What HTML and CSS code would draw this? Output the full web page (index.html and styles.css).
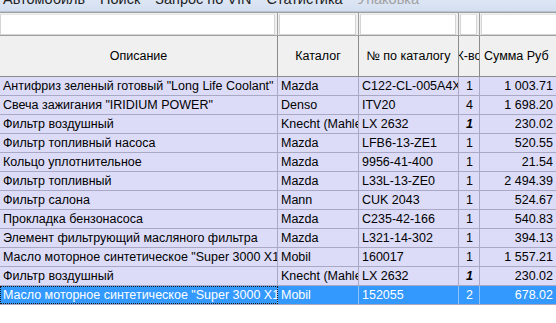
FILE: index.html
```html
<!DOCTYPE html>
<html>
<head>
<meta charset="utf-8">
<link rel="stylesheet" href="styles.css">
</head>
<body>
<div class="menu">
  <div class="menu-items">
    <span>Автомобиль</span>
    <span>Поиск</span>
    <span>Запрос по VIN</span>
    <span>Статистика</span>
    <span class="disabled">Упаковка</span>
  </div>
</div>
<div class="grid">
  <div class="row filter">
    <div class="fc"><div class="box"></div></div>
    <div class="fc"><div class="box"></div></div>
    <div class="fc"><div class="box"></div></div>
    <div class="fc"><div class="box"></div></div>
    <div class="fc"><div class="box"></div></div>
  </div>
  <div class="row head">
    <div class="hc">Описание</div>
    <div class="hc">Каталог</div>
    <div class="hc">№ по каталогу</div>
    <div class="hc clip">К-во</div>
    <div class="hc">Сумма Руб</div>
  </div>
  <div class="row data"><div class="c">Антифриз зеленый готовый "Long Life Coolant"</div><div class="c">Mazda</div><div class="c">C122-CL-005A4X</div><div class="c n">1</div><div class="c r">1 003.71</div></div>
  <div class="row data"><div class="c">Свеча зажигания "IRIDIUM POWER"</div><div class="c">Denso</div><div class="c">ITV20</div><div class="c n">4</div><div class="c r">1 698.20</div></div>
  <div class="row data"><div class="c">Фильтр воздушный</div><div class="c">Knecht (Mahle)</div><div class="c">LX 2632</div><div class="c n bi">1</div><div class="c r">230.02</div></div>
  <div class="row data"><div class="c">Фильтр топливный насоса</div><div class="c">Mazda</div><div class="c">LFB6-13-ZE1</div><div class="c n">1</div><div class="c r">520.55</div></div>
  <div class="row data"><div class="c">Кольцо уплотнительное</div><div class="c">Mazda</div><div class="c">9956-41-400</div><div class="c n">1</div><div class="c r">21.54</div></div>
  <div class="row data"><div class="c">Фильтр топливный</div><div class="c">Mazda</div><div class="c">L33L-13-ZE0</div><div class="c n">1</div><div class="c r">2 494.39</div></div>
  <div class="row data"><div class="c">Фильтр салона</div><div class="c">Mann</div><div class="c">CUK 2043</div><div class="c n">1</div><div class="c r">524.67</div></div>
  <div class="row data"><div class="c">Прокладка бензонасоса</div><div class="c">Mazda</div><div class="c">C235-42-166</div><div class="c n">1</div><div class="c r">540.83</div></div>
  <div class="row data"><div class="c">Элемент фильтрующий масляного фильтра</div><div class="c">Mazda</div><div class="c">L321-14-302</div><div class="c n">1</div><div class="c r">394.13</div></div>
  <div class="row data"><div class="c">Масло моторное синтетическое "Super 3000 X1"</div><div class="c">Mobil</div><div class="c">160017</div><div class="c n">1</div><div class="c r">1 557.21</div></div>
  <div class="row data"><div class="c">Фильтр воздушный</div><div class="c">Knecht (Mahle)</div><div class="c">LX 2632</div><div class="c n bi">1</div><div class="c r">230.02</div></div>
  <div class="row data sel"><div class="c focus">Масло моторное синтетическое "Super 3000 X1"</div><div class="c">Mobil</div><div class="c">152055</div><div class="c n">2</div><div class="c r">678.02</div></div>
</div>
</body>
</html>
```
FILE: styles.css
```css
html, body {
  margin: 0;
  padding: 0;
  background: #ffffff;
  width: 556px;
  height: 323px;
  overflow: hidden;
  font-family: "Liberation Sans", Arial, sans-serif;
  font-size: 12.5px;
  color: #000;
}

.menu {
  height: 11px;
  overflow: hidden;
  background: linear-gradient(#dde6f4, #d3dff1);
  border-bottom: 1px solid #b9c3d3;
}

.menu-items {
  display: flex;
  gap: 15px;
  padding-left: 3px;
  margin-top: -10px;
  font-size: 14.5px;
  line-height: 18px;
  color: #1e1e1e;
}

.menu-items .disabled {
  color: #a0a0a0;
}

.grid {
  width: 620px;
  border-top: 1px solid #a0a0a0;
}

.row {
  display: grid;
  grid-template-columns: 278px 81px 100px 21px 140px;
}

.filter {
  height: 22px;
  background: #f0f0f0;
  border-bottom: 1px solid #a0a0a0;
}

.fc {
  padding: 1px 2px 1px 1px;
  border-right: 1px solid #a0a0a0;
}
.fc:first-child { padding-left: 0; }

.box {
  height: 19px;
  background: #ffffff;
  border: 1px solid #d4d4d4;
  border-top-color: #e6e6e6;
}

.head {
  height: 40px;
  background: #f0f0f0;
  border-bottom: 1px solid #8c8c8c;
}

.hc {
  display: flex;
  align-items: center;
  justify-content: center;
  border-right: 1px solid #8c8c8c;
  overflow: hidden;
  white-space: nowrap;
}
.hc:last-child { justify-content: flex-start; padding-left: 4px; }
.hc.clip { justify-content: center; }

.data {
  height: 18px;
  background: #dcdcf8;
  border-bottom: 1px solid #a9a9c6;
}

.c {
  border-right: 1px solid #a9a9c6;
  padding: 0 2px 0 3px;
  line-height: 19px;
  white-space: nowrap;
  overflow: hidden;
}

.c.n { text-align: center; padding: 0 0 0 1px; }
.c.r { text-align: right; padding-right: 66px; }
.c.bi { font-weight: bold; font-style: italic; }

.sel {
  background: #3399ff;
  color: #ffffff;
}
.sel .c { border-right-color: #8fc1f4; }
.c.focus {
  outline: 1px dotted #1a1a1a;
  outline-offset: -1px;
}
```
